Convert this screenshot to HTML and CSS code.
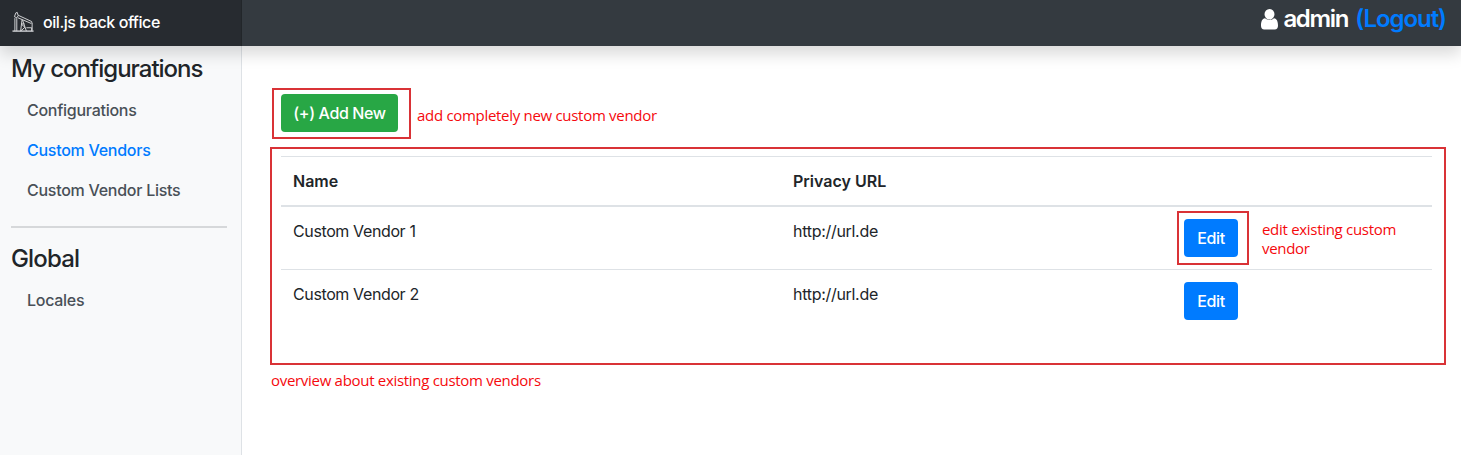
FILE: index.html
```
<!DOCTYPE html>
<html lang="en">
<head>
<meta charset="utf-8">
<title>oil.js back office</title>
<link rel="stylesheet" href="styles.css">
</head>
<body>
<header class="topbar">
  <a class="brand">
    <svg class="brand-icon" viewBox="0 0 24 22" fill="none" stroke="#d5d6d8" stroke-width="1">
      <path d="M.5 20.500H22.500" stroke-width="1.400"/>
      <path d="M2.500 5.500 4 1.500 5.500 1l1 3.500-1.500 2zM6.500 4 20.500 10.500l.5 2.500M6 6.500 20 12.500M3 7v13.500M5 7v13.500"/>
      <path d="M10.500 8.500 9 20.500M11 9l4 11.500M9.500 13h3.500M9.500 13l4 3.500M9 20.500l4.500-4M15 17h5.500v3.500M21 12.500v7.500"/>
    </svg>
    <span class="brand-text">oil.js back office</span>
  </a>
  <div class="user">
    <svg class="user-icon" viewBox="0 0 17 21"><path fill="#fff" d="M8.500 0a5 5.300 0 0 1 0 10.600A5 5.300 0 0 1 8.500 0M4 9.300a6.600 6.600 0 0 0 9 0c2.900.2 4 3.600 4 7.400 0 2.300-1.200 3.800-3.200 3.800H3.200C1.200 20.500 0 19 0 16.700c0-3.800 1.100-7.200 4-7.400"/></svg>
    <span class="user-name">admin</span>
    <a class="logout">(Logout)</a>
  </div>
</header>
<div class="layout">
  <nav class="sidebar">
    <h4 class="group-title t-my">My configurations</h4>
    <a class="link">Configurations</a>
    <a class="link active">Custom Vendors</a>
    <a class="link">Custom Vendor Lists</a>
    <hr class="divider">
    <h4 class="group-title t-global">Global</h4>
    <a class="link">Locales</a>
  </nav>
  <main class="content">
    <div class="toolbar">
      <div class="frame frame-add"><button class="btn btn-add">(+) Add New</button></div>
      <span class="note note-add">add completely new custom vendor</span>
    </div>
    <section class="frame frame-table">
      <div class="row head"><span>Name</span><span>Privacy URL</span><span></span></div>
      <div class="row first">
        <span class="cell">Custom Vendor 1</span><span class="cell url">http://url.de</span>
        <div class="actions"><div class="marked"><button class="btn btn-edit">Edit</button></div><span class="note note-edit">edit existing custom<br>vendor</span></div>
      </div>
      <div class="row">
        <span class="cell">Custom Vendor 2</span><span class="cell url">http://url.de</span>
        <div class="actions"><button class="btn btn-edit">Edit</button></div>
      </div>
    </section>
    <span class="note note-table">overview about existing custom vendors</span>
  </main>
</div>
</body>
</html>
```
FILE: styles.css
```
* { box-sizing: border-box; }
body {
  margin: 0;
  height: 455px;
  overflow: hidden;
  display: flex;
  flex-direction: column;
  background: #fff;
  color: #212529;
  font: 400 16px/24px Inter, "Liberation Sans", sans-serif;
}
span { white-space: nowrap; }
.topbar {
  position: relative;
  z-index: 1;
  flex: 0 0 46px;
  display: flex;
  justify-content: space-between;
  background: #343a40;
  box-shadow: 0 8px 16px rgba(0, 0, 0, .15);
}
.brand {
  width: 242px;
  display: flex;
  align-items: center;
  gap: 8px;
  padding: 0 0 2px 12px;
  background: #272b30;
  border-right: 1px solid #22262a;
  color: #fff;
  font-weight: 500;
}
.brand-icon { width: 23px; height: 22px; }
.brand-text { letter-spacing: -.45px; }
.user {
  display: flex;
  align-items: center;
  padding: 0 15px 8px 0;
  color: #fff;
  font-size: 24px;
  font-weight: 600;
}
.user-icon { width: 17px; height: 21px; margin-right: 5px; }
.user-name { margin-right: 7px; letter-spacing: -1.3px; }
.logout { color: #007bff; letter-spacing: -1.05px; }
.layout { flex: 1; display: flex; }
.sidebar {
  flex: 0 0 242px;
  padding: 8px 14px 0 11px;
  background: #f8f9fa;
  border-right: 1px solid #dee2e6;
}
.group-title { margin: 0 0 7px; font-size: 24px; line-height: 29px; font-weight: 500; }
.t-my { letter-spacing: -1px; }
.t-global { letter-spacing: -.85px; }
.link { display: block; padding: 8px 16px; color: #495057; font-weight: 500; letter-spacing: -.27px; }
.active { color: #007bff; }
.divider { height: 2px; margin: 16px 0; border: 0; background: #d6d8da; }
.content { flex: 1; padding: 42px 15px 0 28px; }
.toolbar { display: flex; gap: 6px; padding-left: 2px; margin-bottom: 8px; }
.frame { border: 2px solid #d93236; }
.frame-add { width: 139px; height: 51px; padding: 4px 7px; }
.btn {
  height: 38px;
  padding: 0;
  border: 0;
  border-radius: 4px;
  color: #fff;
  font: 500 16px/38px Inter, sans-serif;
  letter-spacing: -.38px;
}
.btn-add { width: 117px; background: #28a745; }
.btn-edit { display: block; width: 54px; background: #007bff; }
.note { color: #f5090d; font: 15px/19px "Open Sans", "Noto Sans", sans-serif; letter-spacing: -.3px; }
.note-add { margin-top: 18px; }
.frame-table { width: 1176px; height: 218px; padding: 7px 12px 0 9px; }
.row {
  display: grid;
  grid-template-columns: 500px 391px 1fr;
  height: 63px;
  padding: 12px 12px 0;
  border-top: 1px solid #dee2e6;
}
.head { height: 51px; font-weight: 600; border-bottom: 2px solid #dee2e6; }
.first { height: 62px; border-top: 0; }
.cell { letter-spacing: -.38px; }
.url { letter-spacing: -.3px; }
.actions { display: flex; gap: 24px; }
.marked { position: relative; height: 38px; }
.marked::after {
  content: "";
  position: absolute;
  inset: -8px -11px -8px -7px;
  border: 2px solid #d93236;
}
.note-edit { margin-top: 1px; }
.note-table { display: block; margin: 6px 0 0 1px; }
```
